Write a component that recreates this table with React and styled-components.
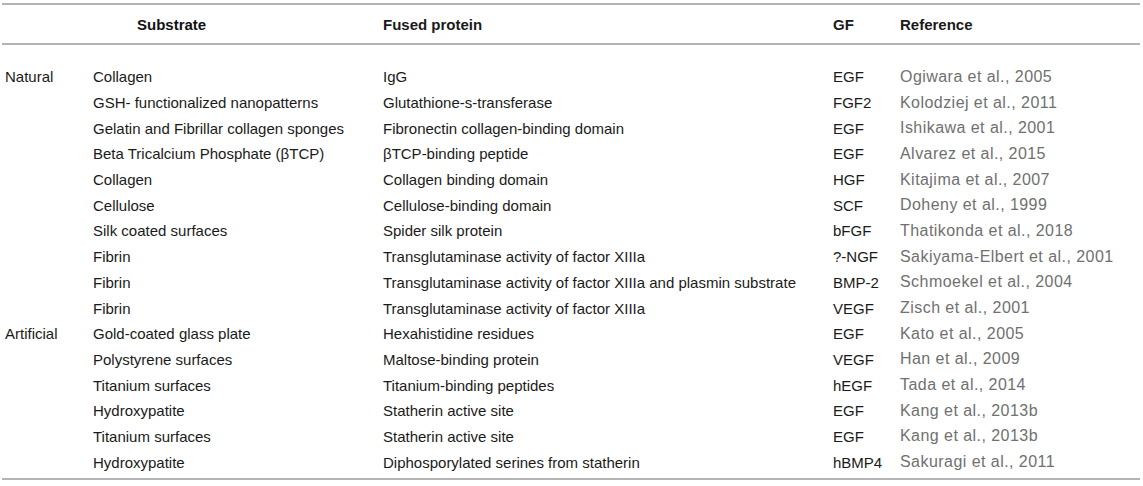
import React from "react";
import styled, { createGlobalStyle } from "styled-components";

const GlobalStyle = createGlobalStyle`
  html, body {
    margin: 0;
    padding: 0;
    background: #fff;
  }
  body {
    font-family: "Liberation Sans", Arial, sans-serif;
    color: #1a1a1a;
  }
`;

const COLS = "91px 290px 450px 67px 1fr";

const Table = styled.div`
  margin: 3px 3px 0 2px;
  border-top: 2px solid #b4b4b4;
  border-bottom: 2px solid #b4b4b4;
  font-size: 15px;
`;

const HeadRow = styled.div`
  display: grid;
  grid-template-columns: ${COLS};
  height: 38px;
  align-items: center;
  border-bottom: 2px solid #b4b4b4;
  font-weight: bold;
  color: #111;
`;

const Body = styled.div`
  padding: 19px 0 3px;
`;

const Row = styled.div`
  display: grid;
  grid-template-columns: ${COLS};
  height: 25.7px;
  align-items: center;
`;

const Cell = styled.div`
  padding-left: ${(p) => p.$pad || 0}px;
  color: #1a1a1a;
  white-space: nowrap;
`;

// citations are links in the source table, a lighter grey and a touch wider
const Cite = styled.div`
  color: #707070;
  font-size: 16px;
  letter-spacing: 0.45px;
  white-space: nowrap;
`;

const SpanHead = styled.div`
  grid-column: 1 / span 2;
  padding-left: 135px;
`;

const rows = [
  ["Natural", "Collagen", "IgG", "EGF", "Ogiwara et al., 2005"],
  ["", "GSH- functionalized nanopatterns", "Glutathione-s-transferase", "FGF2", "Kolodziej et al., 2011"],
  ["", "Gelatin and Fibrillar collagen sponges", "Fibronectin collagen-binding domain", "EGF", "Ishikawa et al., 2001"],
  ["", "Beta Tricalcium Phosphate (βTCP)", "βTCP-binding peptide", "EGF", "Alvarez et al., 2015"],
  ["", "Collagen", "Collagen binding domain", "HGF", "Kitajima et al., 2007"],
  ["", "Cellulose", "Cellulose-binding domain", "SCF", "Doheny et al., 1999"],
  ["", "Silk coated surfaces", "Spider silk protein", "bFGF", "Thatikonda et al., 2018"],
  ["", "Fibrin", "Transglutaminase activity of factor XIIIa", "?-NGF", "Sakiyama-Elbert et al., 2001"],
  ["", "Fibrin", "Transglutaminase activity of factor XIIIa and plasmin substrate", "BMP-2", "Schmoekel et al., 2004"],
  ["", "Fibrin", "Transglutaminase activity of factor XIIIa", "VEGF", "Zisch et al., 2001"],
  ["Artificial", "Gold-coated glass plate", "Hexahistidine residues", "EGF", "Kato et al., 2005"],
  ["", "Polystyrene surfaces", "Maltose-binding protein", "VEGF", "Han et al., 2009"],
  ["", "Titanium surfaces", "Titanium-binding peptides", "hEGF", "Tada et al., 2014"],
  ["", "Hydroxypatite", "Statherin active site", "EGF", "Kang et al., 2013b"],
  ["", "Titanium surfaces", "Statherin active site", "EGF", "Kang et al., 2013b"],
  ["", "Hydroxypatite", "Diphosporylated serines from statherin", "hBMP4", "Sakuragi et al., 2011"],
];

export default function App() {
  return (
    <>
      <GlobalStyle />
      <Table>
        <HeadRow>
          <SpanHead>Substrate</SpanHead>
          <Cell>Fused protein</Cell>
          <Cell>GF</Cell>
          <Cell>Reference</Cell>
        </HeadRow>
        <Body>
          {rows.map((r, i) => (
            <Row key={i}>
              <Cell $pad={3}>{r[0]}</Cell>
              <Cell>{r[1]}</Cell>
              <Cell>{r[2]}</Cell>
              <Cell>{r[3]}</Cell>
              <Cite>{r[4]}</Cite>
            </Row>
          ))}
        </Body>
      </Table>
    </>
  );
}
